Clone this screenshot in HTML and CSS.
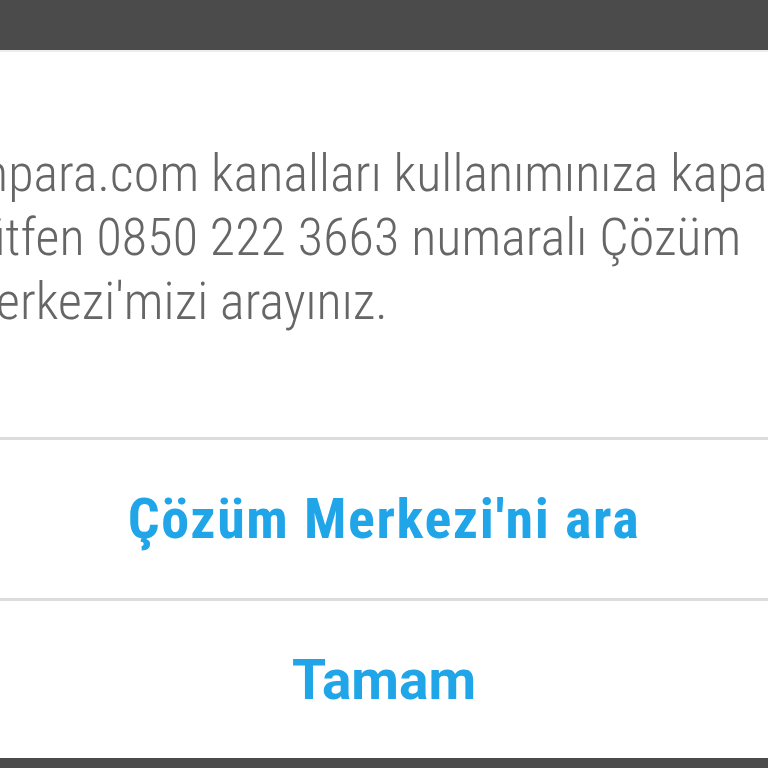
FILE: index.html
```html
<!DOCTYPE html>
<html lang="tr"><head><meta charset="utf-8"><link rel="stylesheet" href="styles.css"></head>
<body>
<div class="screen">
  <div class="topbar"></div>
  <div class="dialog">
    <div class="message">
      <div class="line">Enpara.com kanalları kullanımınıza kapalıdır.</div>
      <div class="line">Lütfen 0850 222 3663 numaralı Çözüm</div>
      <div class="line">Merkezi'mizi arayınız.</div>
    </div>
    <div class="actions">
      <div class="divider"></div>
      <button class="btn btn-call">Çözüm Merkezi'ni ara</button>
      <div class="divider"></div>
      <button class="btn btn-ok">Tamam</button>
    </div>
  </div>
  <div class="bottombar"></div>
</div>
</body></html>
```
FILE: styles.css
```css
html,body{margin:0;padding:0;background:#4b4b4b;overflow:hidden}
.screen{width:768px;height:768px;display:flex;flex-direction:column;overflow:hidden}
.topbar{height:50px;background:#4b4b4b;flex:none}
.dialog{flex:none;height:708px;background:#fff;border-top:2px solid #eeeeee;box-sizing:border-box;display:flex;flex-direction:column;overflow:hidden}
.message{flex:none;padding-top:90px;margin-left:-43px;height:385px;box-sizing:border-box;font-family:"Roboto Condensed",Roboto,sans-serif;font-weight:300;font-size:52px;letter-spacing:0.1px;line-height:64px;color:#666666}
.line{white-space:nowrap}
.actions{display:flex;flex-direction:column}
.divider{height:3px;background:#dcdcdc}
.btn{height:158px;border:0;background:#fff;padding:0;margin:0;display:flex;align-items:center;justify-content:center;color:#1fa5e8;cursor:pointer;white-space:nowrap}
.btn-call{font-family:"Roboto Condensed",Roboto,sans-serif;font-weight:700;font-size:56px;letter-spacing:1.6px}
.btn-ok{font-family:Roboto,sans-serif;font-weight:700;font-size:55px;height:157px}
.bottombar{flex:1;background:#4b4b4b}
```
